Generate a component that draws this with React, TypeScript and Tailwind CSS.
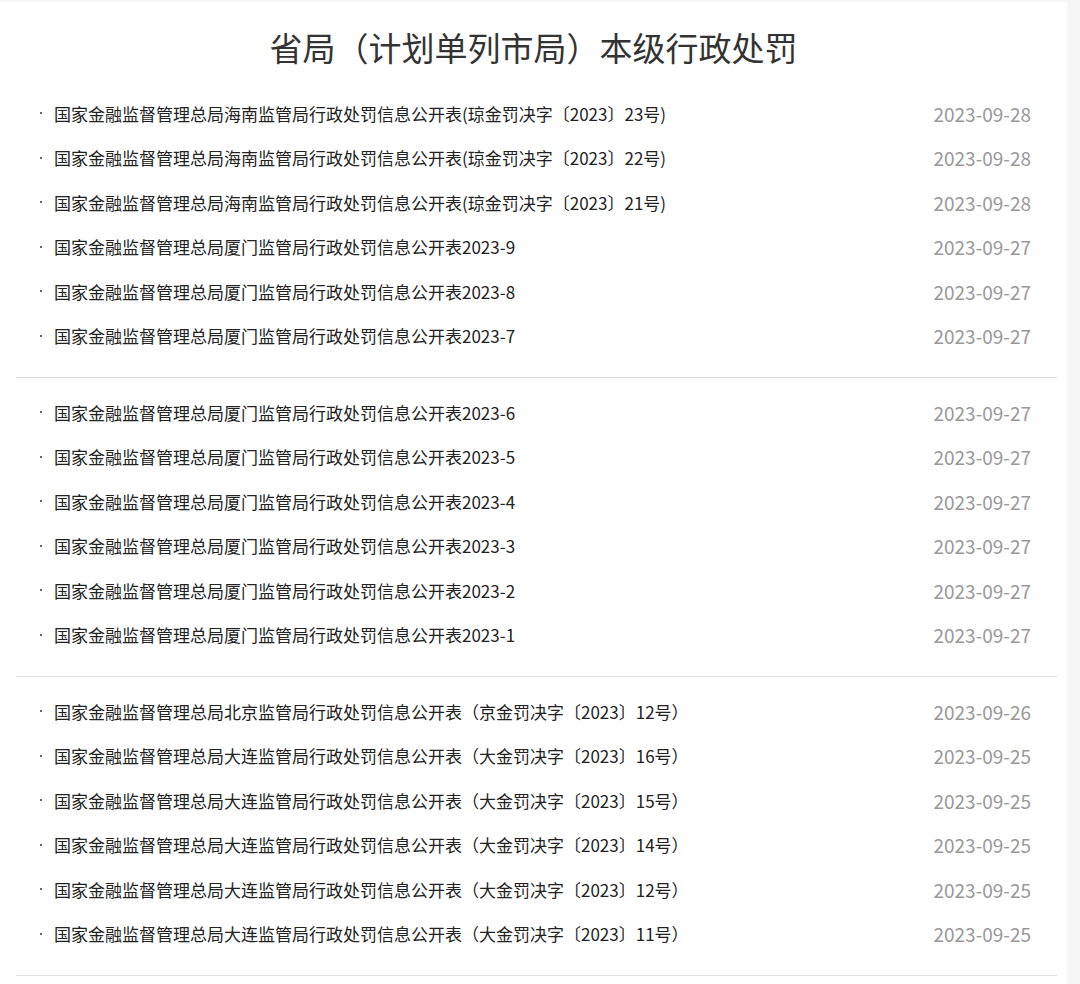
import React from 'react';

const font = { fontFamily: '"Noto Sans CJK SC", "Microsoft YaHei", sans-serif' };

const groups: [string, string][][] = [
  [
    ['国家金融监督管理总局海南监管局行政处罚信息公开表(琼金罚决字〔2023〕23号)', '2023-09-28'],
    ['国家金融监督管理总局海南监管局行政处罚信息公开表(琼金罚决字〔2023〕22号)', '2023-09-28'],
    ['国家金融监督管理总局海南监管局行政处罚信息公开表(琼金罚决字〔2023〕21号)', '2023-09-28'],
    ['国家金融监督管理总局厦门监管局行政处罚信息公开表2023-9', '2023-09-27'],
    ['国家金融监督管理总局厦门监管局行政处罚信息公开表2023-8', '2023-09-27'],
    ['国家金融监督管理总局厦门监管局行政处罚信息公开表2023-7', '2023-09-27'],
  ],
  [
    ['国家金融监督管理总局厦门监管局行政处罚信息公开表2023-6', '2023-09-27'],
    ['国家金融监督管理总局厦门监管局行政处罚信息公开表2023-5', '2023-09-27'],
    ['国家金融监督管理总局厦门监管局行政处罚信息公开表2023-4', '2023-09-27'],
    ['国家金融监督管理总局厦门监管局行政处罚信息公开表2023-3', '2023-09-27'],
    ['国家金融监督管理总局厦门监管局行政处罚信息公开表2023-2', '2023-09-27'],
    ['国家金融监督管理总局厦门监管局行政处罚信息公开表2023-1', '2023-09-27'],
  ],
  [
    ['国家金融监督管理总局北京监管局行政处罚信息公开表（京金罚决字〔2023〕12号）', '2023-09-26'],
    ['国家金融监督管理总局大连监管局行政处罚信息公开表（大金罚决字〔2023〕16号）', '2023-09-25'],
    ['国家金融监督管理总局大连监管局行政处罚信息公开表（大金罚决字〔2023〕15号）', '2023-09-25'],
    ['国家金融监督管理总局大连监管局行政处罚信息公开表（大金罚决字〔2023〕14号）', '2023-09-25'],
    ['国家金融监督管理总局大连监管局行政处罚信息公开表（大金罚决字〔2023〕12号）', '2023-09-25'],
    ['国家金融监督管理总局大连监管局行政处罚信息公开表（大金罚决字〔2023〕11号）', '2023-09-25'],
  ],
];

export default function App() {
  return (
    <div className="w-[1080px] h-[984px] overflow-hidden bg-[#f6f6f6] pt-[2px]" style={font}>
      <div className="w-[1067px] h-full bg-white">
        <div className="h-[77px] flex items-center justify-center pt-[14px]">
          <h1 className="text-[33px] text-[#333]">省局（计划单列市局）本级行政处罚</h1>
        </div>
        <div className="mx-4 w-[1041px]">
          {groups.map((g, i) => (
            <div key={i} className="pt-3 pb-[19px] border-b border-[#e2e2e2]">
              {g.map(([t, d], j) => (
                <div key={j} className="h-[44.5px] flex items-center justify-between pl-[24px] pr-[26px] text-[17px] leading-none">
                  <div className="flex items-center text-[#222]">
                    <span className="w-[2px] h-[2px] bg-[#666] mr-[12px]" />
                    <span>{t}</span>
                  </div>
                  <span className="text-[#999] text-[19px]">{d}</span>
                </div>
              ))}
            </div>
          ))}
        </div>
      </div>
    </div>
  );
}
